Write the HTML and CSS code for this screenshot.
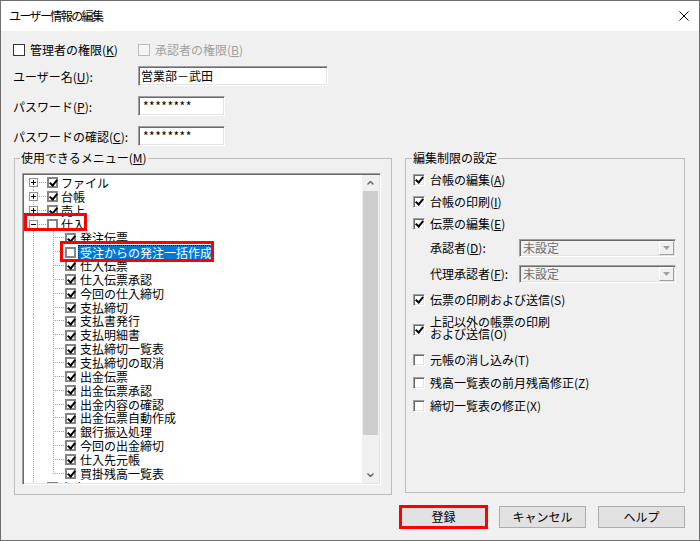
FILE: index.html
```html
<!DOCTYPE html>
<html lang="ja">
<head>
<meta charset="utf-8">
<title>ユーザー情報の編集</title>
<link rel="stylesheet" href="styles.css">
</head>
<body>
<div class="window">
  <div class="titlebar">
    <span class="title">ユーザー情報の編集</span>
    <span class="close"><svg width="10" height="10" viewBox="0 0 10 10"><path d="M0.5 0.5L9.5 9.5M9.5 0.5L0.5 9.5" stroke="#000" stroke-width="1" fill="none"/></svg></span>
  </div>
  <div class="content">
    <div class="perm-row">
      <label class="chk chk-admin"><span class="box"></span>管理者の権限(<u>K</u>)</label>
      <label class="chk disabled"><span class="box"></span>承認者の権限(<u>B</u>)</label>
    </div>
    <div class="form-grid">
      <span class="lbl">ユーザー名(<u>U</u>):</span><span class="field wide">営業部－武田</span>
      <span class="lbl">パスワード(<u>P</u>):</span><span class="field pw">********</span>
      <span class="lbl">パスワードの確認(<u>C</u>):</span><span class="field pw">********</span>
    </div>
    <div class="groups">
      <fieldset class="group menu-group">
        <legend>使用できるメニュー(<u>M</u>)</legend>
        <div class="tree">
          <div class="tree-rows">
            <div class="node root first"><span class="g g-root"><svg class="exp" width="9" height="9" viewBox="0 0 9 9"><rect x="0.5" y="0.5" width="8" height="8" fill="#fff" stroke="#919191"/><path d="M2 4.5H7M4.5 2V7" stroke="#000"/></svg></span><span class="cb on"></span><span class="txt">ファイル</span></div>
            <div class="node root"><span class="g g-root"><svg class="exp" width="9" height="9" viewBox="0 0 9 9"><rect x="0.5" y="0.5" width="8" height="8" fill="#fff" stroke="#919191"/><path d="M2 4.5H7M4.5 2V7" stroke="#000"/></svg></span><span class="cb on"></span><span class="txt">台帳</span></div>
            <div class="node root"><span class="g g-root"><svg class="exp" width="9" height="9" viewBox="0 0 9 9"><rect x="0.5" y="0.5" width="8" height="8" fill="#fff" stroke="#919191"/><path d="M2 4.5H7M4.5 2V7" stroke="#000"/></svg></span><span class="cb on"></span><span class="txt">売上</span></div>
            <div class="node root"><span class="g g-root"><svg class="exp" width="9" height="9" viewBox="0 0 9 9"><rect x="0.5" y="0.5" width="8" height="8" fill="#fff" stroke="#919191"/><path d="M2 4.5H7" stroke="#000"/></svg></span><span class="cb"></span><span class="txt">仕入</span></div>
            <div class="node child"><span class="g g-pass"></span><span class="g g-branch"></span><span class="cb on"></span><span class="txt">発注伝票</span></div>
            <div class="node child"><span class="g g-pass"></span><span class="g g-branch"></span><span class="cb"></span><span class="txt sel">受注からの発注一括作成</span></div>
            <div class="node child"><span class="g g-pass"></span><span class="g g-branch"></span><span class="cb on"></span><span class="txt">仕入伝票</span></div>
            <div class="node child"><span class="g g-pass"></span><span class="g g-branch"></span><span class="cb on"></span><span class="txt">仕入伝票承認</span></div>
            <div class="node child"><span class="g g-pass"></span><span class="g g-branch"></span><span class="cb on"></span><span class="txt">今回の仕入締切</span></div>
            <div class="node child"><span class="g g-pass"></span><span class="g g-branch"></span><span class="cb on"></span><span class="txt">支払締切</span></div>
            <div class="node child"><span class="g g-pass"></span><span class="g g-branch"></span><span class="cb on"></span><span class="txt">支払書発行</span></div>
            <div class="node child"><span class="g g-pass"></span><span class="g g-branch"></span><span class="cb on"></span><span class="txt">支払明細書</span></div>
            <div class="node child"><span class="g g-pass"></span><span class="g g-branch"></span><span class="cb on"></span><span class="txt">支払締切一覧表</span></div>
            <div class="node child"><span class="g g-pass"></span><span class="g g-branch"></span><span class="cb on"></span><span class="txt">支払締切の取消</span></div>
            <div class="node child"><span class="g g-pass"></span><span class="g g-branch"></span><span class="cb on"></span><span class="txt">出金伝票</span></div>
            <div class="node child"><span class="g g-pass"></span><span class="g g-branch"></span><span class="cb on"></span><span class="txt">出金伝票承認</span></div>
            <div class="node child"><span class="g g-pass"></span><span class="g g-branch"></span><span class="cb on"></span><span class="txt">出金内容の確認</span></div>
            <div class="node child"><span class="g g-pass"></span><span class="g g-branch"></span><span class="cb on"></span><span class="txt">出金伝票自動作成</span></div>
            <div class="node child"><span class="g g-pass"></span><span class="g g-branch"></span><span class="cb on"></span><span class="txt">銀行振込処理</span></div>
            <div class="node child"><span class="g g-pass"></span><span class="g g-branch"></span><span class="cb on"></span><span class="txt">今回の出金締切</span></div>
            <div class="node child"><span class="g g-pass"></span><span class="g g-branch"></span><span class="cb on"></span><span class="txt">仕入先元帳</span></div>
            <div class="node child last"><span class="g g-pass"></span><span class="g g-branch"></span><span class="cb on"></span><span class="txt">買掛残高一覧表</span></div>
            <div class="node root"><span class="g g-root"><svg class="exp" width="9" height="9" viewBox="0 0 9 9"><rect x="0.5" y="0.5" width="8" height="8" fill="#fff" stroke="#919191"/><path d="M2 4.5H7M4.5 2V7" stroke="#000"/></svg></span><span class="cb on"></span><span class="txt">在庫</span></div>
          </div>
          <div class="scrollbar">
            <span class="sb-arrow"><svg width="7" height="4" viewBox="0 0 7 4"><path d="M0.5 3.5L3.5 0.5L6.5 3.5" stroke="#606060" stroke-width="1.4" fill="none"/></svg></span>
            <span class="sb-thumb"></span>
            <span class="sb-track"></span>
            <span class="sb-arrow"><svg width="7" height="4" viewBox="0 0 7 4"><path d="M0.5 0.5L3.5 3.5L6.5 0.5" stroke="#606060" stroke-width="1.4" fill="none"/></svg></span>
          </div>
          <span class="anno anno-parent"></span>
          <span class="anno anno-item"></span>
        </div>
      </fieldset>
      <fieldset class="group limit-group">
        <legend>編集制限の設定</legend>
        <div class="opts">
          <label class="opt"><span class="box3d on"></span>台帳の編集(<u>A</u>)</label>
          <label class="opt"><span class="box3d on"></span>台帳の印刷(<u>I</u>)</label>
          <label class="opt"><span class="box3d on"></span>伝票の編集(<u>E</u>)</label>
          <div class="sub"><span class="sub-lbl">承認者(<u>D</u>):</span><span class="combo"><span class="combo-text">未設定</span><span class="combo-btn"><svg width="7" height="4" viewBox="0 0 7 4"><path d="M0 0H7L3.5 4Z" fill="#a0a0a0"/></svg></span></span></div>
          <div class="sub"><span class="sub-lbl">代理承認者(<u>F</u>):</span><span class="combo"><span class="combo-text">未設定</span><span class="combo-btn"><svg width="7" height="4" viewBox="0 0 7 4"><path d="M0 0H7L3.5 4Z" fill="#a0a0a0"/></svg></span></span></div>
          <label class="opt"><span class="box3d on"></span>伝票の印刷および送信(S)</label>
          <label class="opt multi"><span class="box3d on"></span><span class="multi-text">上記以外の帳票の印刷<br>および送信(O)</span></label>
          <label class="opt tall"><span class="box3d"></span>元帳の消し込み(T)</label>
          <label class="opt tall"><span class="box3d"></span>残高一覧表の前月残高修正(Z)</label>
          <label class="opt tall"><span class="box3d"></span>締切一覧表の修正(X)</label>
        </div>
      </fieldset>
    </div>
    <div class="buttons">
      <span class="btn marked">登録</span>
      <span class="btn">キャンセル</span>
      <span class="btn">ヘルプ</span>
    </div>
  </div>
</div>
</body>
</html>
```
FILE: styles.css
```css
* { box-sizing: border-box; }
html, body { margin: 0; padding: 0; }
body {
  width: 700px;
  height: 541px;
  overflow: hidden;
  background: #f0f0f0;
  font-family: "Noto Sans CJK JP", "Noto Sans", sans-serif;
  font-size: 12px;
  color: #000;
}
u { text-decoration: underline; text-underline-offset: 1px; }

.window {
  width: 700px;
  height: 541px;
  border: 1px solid #6f6f6f;
  background: #f0f0f0;
  display: flex;
  flex-direction: column;
}
.titlebar {
  flex: none;
  height: 30px;
  background: #fff;
  display: flex;
  align-items: center;
  justify-content: space-between;
  padding: 0 10px 0 8px;
}
.title { line-height: 16px; letter-spacing: -1.6px; }
.close { display: flex; width: 10px; height: 10px; }

.content {
  flex: 1;
  display: flex;
  flex-direction: column;
  padding: 0 14px 0 12px;
}

/* top checkboxes */
.perm-row { margin-top: 11px; height: 16px; display: flex; align-items: center; }
.chk { display: flex; align-items: center; line-height: 16px; white-space: nowrap; }
.chk-admin { width: 125px; }
.box { flex: none; width: 12px; height: 12px; margin-right: 5px; border: 1px solid #333; background: #fff; }
.chk.disabled { color: #a0a0a0; }
.chk.disabled .box { border-color: #bcbcbc; background: #f4f4f4; }

/* form */
.form-grid {
  margin-top: 8px;
  display: grid;
  grid-template-columns: 125px auto;
  grid-auto-rows: 20px;
  row-gap: 10px;
  align-items: center;
}
.lbl { line-height: 16px; padding-top: 2px; white-space: nowrap; }
.field {
  justify-self: start;
  height: 20px;
  background: #fff;
  border: 1px solid;
  border-color: #a0a0a0 #fff #fff #a0a0a0;
  box-shadow: inset 1px 1px 0 #696969, inset -1px -1px 0 #e3e3e3;
  line-height: 18px;
  padding: 0 2px;
  white-space: nowrap;
}
.field.wide { width: 190px; }
.field.pw { width: 87px; padding-left: 4px; letter-spacing: 0.5px; }

/* group boxes */
.groups { margin-top: 4px; display: flex; align-items: stretch; gap: 13px; }
.group {
  margin: 0;
  min-width: 0;
  border: 1px solid #bcbcbc;
}
.group legend { line-height: 16px; font-size: 12px; padding: 0 1px; }
.menu-group { width: 378px; margin-left: 1px; padding: 7px 10px 9px 7px; }
.menu-group legend { margin-left: -2px; }
.limit-group { width: 280px; margin-bottom: 2px; padding: 3px 7px 0 7px; }
.limit-group legend { margin-left: -1px; }

/* tree view */
.tree {
  position: relative;
  width: 359px;
  height: 312px;
  border: 1px solid;
  border-color: #a0a0a0 #fff #fff #a0a0a0;
  box-shadow: inset 1px 1px 0 #696969, inset -1px -1px 0 #e3e3e3;
  padding: 1px;
  background: #fff;
  display: flex;
}
.tree-rows { flex: 1; overflow: hidden; padding-top: 1px; }
.node {
  height: 13.85px;
  line-height: 13.85px;
  display: flex;
  align-items: center;
  white-space: nowrap;
}
.g { flex: none; align-self: stretch; width: 20px; background-repeat: no-repeat; }
.g-root {
  width: 22px;
  display: flex;
  align-items: center;
  background-image:
    repeating-linear-gradient(to bottom, #a0a0a0 0 1px, transparent 1px 2px),
    repeating-linear-gradient(to right, #a0a0a0 0 1px, transparent 1px 2px);
  background-size: 1px 100%, 13px 1px;
  background-position: 9px 0, 9px 6px;
}
.node.first .g-root { background-size: 1px 50%, 13px 1px; background-position: 9px 100%, 9px 6px; }
.exp { margin-left: 5px; flex: none; }
.g-pass {
  background-image: repeating-linear-gradient(to bottom, #a0a0a0 0 1px, transparent 1px 2px);
  background-size: 1px 100%;
  background-position: 9px 0;
}
.g-branch {
  background-image:
    repeating-linear-gradient(to bottom, #a0a0a0 0 1px, transparent 1px 2px),
    repeating-linear-gradient(to right, #a0a0a0 0 1px, transparent 1px 2px);
  background-size: 1px 100%, 11px 1px;
  background-position: 9px 0, 9px 6px;
}
.node.last .g-branch { background-size: 1px 7px, 11px 1px; }

.cb {
  position: relative;
  flex: none;
  width: 11px;
  height: 11px;
  border: 2px solid #858585;
  background: #fff;
}
.cb.on::after {
  content: "";
  position: absolute;
  left: 2px;
  top: -1px;
  width: 3px;
  height: 6px;
  border: solid #000;
  border-width: 0 2px 2px 0;
  transform: rotate(40deg);
}
.root .cb { margin-left: 1px; margin-right: 1px; }
.child .cb { margin-left: 1px; margin-right: 2px; }
.txt { padding: 0 2px; }
.txt.sel {
  background: #0078d7;
  color: #fff;
  line-height: 15px;
  outline: 1px dotted #1a1a1a;
  outline-offset: -1px;
}

.scrollbar { flex: none; width: 17px; display: flex; flex-direction: column; background: #f0f0f0; }
.sb-arrow { flex: none; height: 16px; display: flex; align-items: center; justify-content: center; }
.sb-thumb { flex: none; height: 244px; margin: 0 1px; background: #cdcdcd; }
.sb-track { flex: 1; }

.anno { position: absolute; border: 3px solid #ff0000; pointer-events: none; }
.anno-parent { left: 1px; top: 39px; width: 63px; height: 18px; }
.anno-item { left: 37px; top: 67px; width: 154px; height: 21px; }

/* edit limits */
.opts { display: flex; flex-direction: column; }
.opt { display: flex; align-items: center; height: 22px; white-space: nowrap; line-height: 16px; }
.opt.tall { height: 23px; }
.sub + .opt { margin-top: 6px; }
.opt.multi { height: 24px; margin-top: 5px; }
.opt.multi + .opt { margin-top: 8px; }
.multi-text { line-height: 12px; }
.opt.multi .box3d { margin-top: 4px; }
.box3d {
  position: relative;
  flex: none;
  width: 12px;
  height: 12px;
  margin-right: 5px;
  background: #fff;
  border: 1px solid;
  border-color: #a0a0a0 #fff #fff #a0a0a0;
  box-shadow: inset 1px 1px 0 #696969, inset -1px -1px 0 #e3e3e3;
}
.box3d.on::after {
  content: "";
  position: absolute;
  left: 3px;
  top: 0px;
  width: 3px;
  height: 6px;
  border: solid #000;
  border-width: 0 2px 2px 0;
  transform: rotate(40deg);
}
.sub { display: flex; align-items: center; height: 18px; padding-left: 17px; white-space: nowrap; }
.opt + .sub { margin-top: 4px; }
.sub + .sub { margin-top: 8px; }
.sub-lbl { width: 89px; flex: none; line-height: 16px; }
.combo {
  display: flex;
  width: 157px;
  height: 18px;
  padding: 1px;
  background: #f0f0f0;
  border: 1px solid;
  border-color: #a0a0a0 #fff #fff #a0a0a0;
  box-shadow: inset 1px 1px 0 #696969, inset -1px -1px 0 #e3e3e3;
}
.combo-text { flex: 1; color: #6d6d6d; line-height: 14px; padding-left: 2px; }
.combo-btn {
  flex: none;
  width: 15px;
  display: flex;
  align-items: center;
  justify-content: center;
  border: 1px solid;
  border-color: #fff #a0a0a0 #a0a0a0 #fff;
  background: #f0f0f0;
}

/* buttons */
.buttons { margin-top: 11px; display: flex; justify-content: flex-end; gap: 12px; }
.btn {
  width: 87px;
  height: 22px;
  background: #e1e1e1;
  border: 1px solid #adadad;
  line-height: 20px;
  text-align: center;
  white-space: nowrap;
}
.btn.marked { outline: 3px solid #ff0000; outline-offset: -2px; }
```
